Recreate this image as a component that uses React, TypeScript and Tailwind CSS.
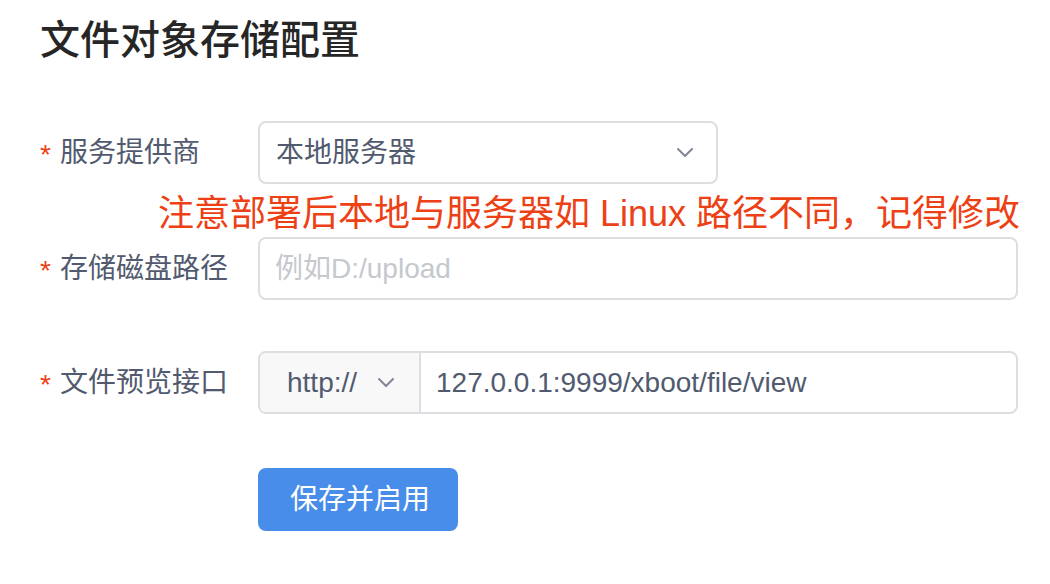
import React from 'react'

const font = { fontFamily: "'Liberation Sans', 'Noto Sans CJK SC', sans-serif" }

function Chevron({ className }: { className?: string }) {
  return (
    <svg className={className} width="18" height="11" viewBox="0 0 18 11" fill="none">
      <polyline points="2,2 9,9 16,2" stroke="#808695" strokeWidth="2" strokeLinecap="round" strokeLinejoin="round" />
    </svg>
  )
}

function Label({ text }: { text: string }) {
  return (
    <div className="w-[218px] shrink-0 flex items-center text-[28px] text-[#515a6e]">
      <span className="text-[#ed4014] text-[28px] mr-[9px] mt-[4px]">*</span>
      <span>{text}</span>
    </div>
  )
}

export default function App() {
  return (
    <div className="w-[1050px] h-[584px] bg-white pl-[40px] overflow-hidden" style={font}>
      <h1 className="h-[80px] leading-[80px] text-[40px] font-medium text-[#262626]">文件对象存储配置</h1>

      {/* service provider */}
      <div className="mt-[41px] flex items-center h-[63px]">
        <Label text="服务提供商" />
        <div className="w-[460px] h-[63px] border-2 border-[#dcdee2] rounded-[8px] flex items-center justify-between pl-[16px] pr-[22px]">
          <span className="text-[28px] text-[#515a6e]">本地服务器</span>
          <Chevron />
        </div>
      </div>

      <div className="h-[53px] pt-[6px] pl-[118px]">
        <p className="leading-[47px] text-[36px] text-[#ed4014] whitespace-nowrap">注意部署后本地与服务器如 Linux 路径不同，记得修改</p>
      </div>

      {/* disk path */}
      <div className="flex items-center h-[63px]">
        <Label text="存储磁盘路径" />
        <div className="w-[760px] h-[63px] border-2 border-[#dcdee2] rounded-[8px] flex items-center pl-[15px]">
          <span className="text-[28px] text-[#c5c8ce]">例如D:/upload</span>
        </div>
      </div>

      {/* preview url */}
      <div className="mt-[51px] flex items-center h-[63px]">
        <Label text="文件预览接口" />
        <div className="w-[760px] h-[63px] border-2 border-[#dcdee2] rounded-[8px] flex overflow-hidden">
          <div className="w-[161px] shrink-0 bg-[#f8f8f9] border-r-2 border-[#dcdee2] flex items-center pl-[27px] gap-[20px]">
            <span className="text-[28px] text-[#515a6e]">http://</span>
            <Chevron />
          </div>
          <div className="flex-1 flex items-center pl-[15px]">
            <span className="text-[28px] text-[#515a6e]">127.0.0.1:9999/xboot/file/view</span>
          </div>
        </div>
      </div>

      <div className="mt-[54px] pl-[218px]">
        <button className="w-[200px] h-[63px] rounded-[8px] bg-[#488de9] text-white text-[28px] pl-[4px]">保存并启用</button>
      </div>
    </div>
  )
}
